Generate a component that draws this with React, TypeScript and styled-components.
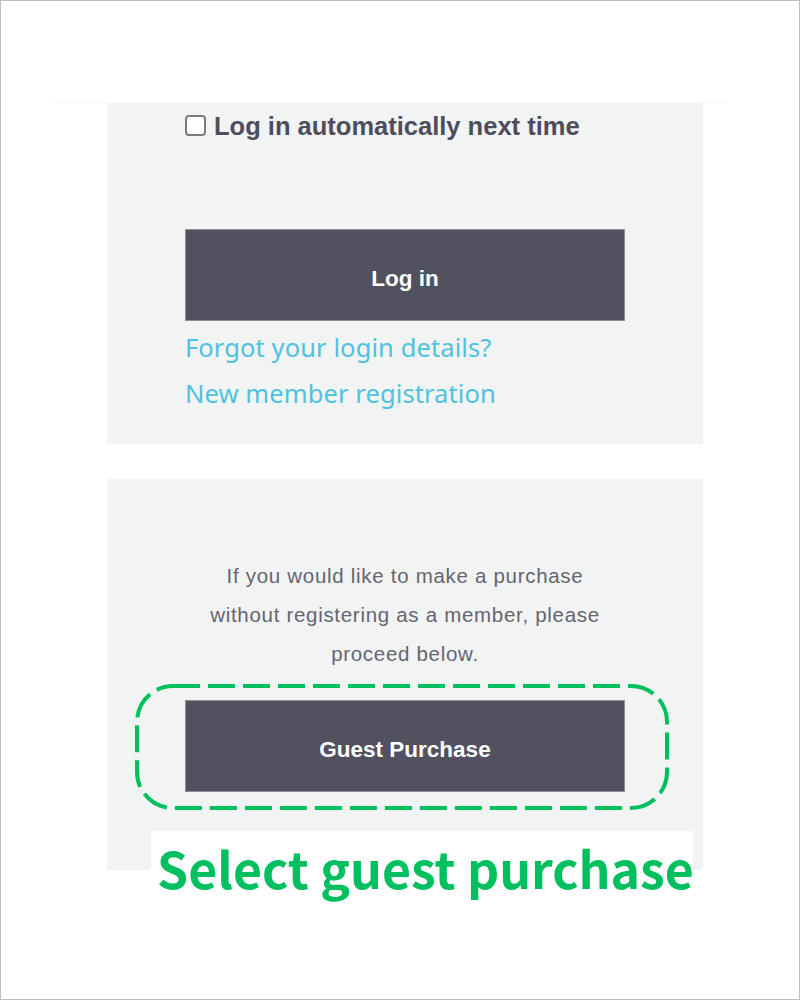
import styled, { createGlobalStyle } from 'styled-components';

const GlobalStyle = createGlobalStyle`
  html, body {
    margin: 0;
    padding: 0;
    background: #fff;
  }
  * {
    box-sizing: border-box;
  }
`

const Frame = styled.div`
  width: 800px;
  height: 1000px;
  border: 1px solid #bdbdbd;
  background: #fff;
  padding-top: 101px;
  font-family: "Liberation Sans", Arial, sans-serif;
`

const TopStrip = styled.div`
  margin-left: 49px;
  width: 678px;
  height: 1px;
  background: #f6f7f7;
`

const Panel = styled.div<{ $top: number; $bottom: number }>`
  margin-left: 106px;
  width: 596px;
  background: #f2f3f3;
  padding: ${p => p.$top}px 78px ${p => p.$bottom}px;
`

const CheckRow = styled.label`
  display: flex;
  align-items: center;
  gap: 8px;
  height: 30px;
  color: #4e4d5d;
  font-size: 25.5px;
  font-weight: 700;
  cursor: pointer;
`

const CheckBox = styled.span`
  width: 21px;
  height: 21px;
  margin-top: -2px;
  border: 2px solid #7a7a7a;
  border-radius: 4px;
  background: #fff;
  flex-shrink: 0;
`

const DarkButton = styled.button<{ $mt: number }>`
  display: flex;
  align-items: center;
  justify-content: center;
  width: 440px;
  height: 92px;
  margin-top: ${p => p.$mt}px;
  padding-top: 8px;
  background: #52515f;
  border: 1px solid #8e8d98;
  color: #fff;
  font-family: "Liberation Sans", Arial, sans-serif;
  font-size: 22.5px;
  font-weight: 700;
  cursor: pointer;
`

const Links = styled.div`
  display: flex;
  flex-direction: column;
  margin-top: 3px;
`

const TextLink = styled.a`
  display: block;
  height: 46px;
  line-height: 46px;
  color: #4fc2e0;
  font-family: "Noto Sans", sans-serif;
  font-size: 25.5px;
  letter-spacing: 0.1px;
  text-decoration: none;
  white-space: nowrap;
`

const Note = styled.p`
  margin: 0;
  text-align: center;
  color: #666570;
  font-size: 20.5px;
  line-height: 39px;
  letter-spacing: 0.7px;
`

const Highlight = styled.div`
  position: relative;
  width: 440px;
`

const DashedRing = styled.svg`
  position: absolute;
  left: -50px;
  top: -16px;
  width: 534px;
  height: 126px;
  overflow: visible;
  pointer-events: none;
`

const Caption = styled.div`
  margin-top: -39px;
  margin-left: 150px;
  width: 542px;
  background: #fff;
  padding-left: 6px;
  color: #00bf5f;
  font-family: "Noto Sans CJK JP", "Noto Sans", sans-serif;
  font-size: 50px;
  font-weight: 700;
  line-height: 72px;
  white-space: nowrap;
`

const Gap = styled.div`
  height: 35px;
`

export default function App() {
  return (
    <>
      <GlobalStyle />
      <Frame>
        <TopStrip />
        <Panel $top={8} $bottom={28}>
          <CheckRow>
            <CheckBox />
            Log in automatically next time
          </CheckRow>
          <DarkButton $mt={88}>Log in</DarkButton>
          <Links>
            <TextLink href="#">Forgot your login details?</TextLink>
            <TextLink href="#">New member registration</TextLink>
          </Links>
        </Panel>
        <Gap />
        <Panel $top={77} $bottom={78}>
          <Note>
            If you would like to make a purchase
            <br />
            without registering as a member, please
            <br />
            proceed below.
          </Note>
          <Highlight>
            <DarkButton $mt={27}>Guest Purchase</DarkButton>
            <DashedRing viewBox="0 0 534 126">
              <rect
                x="2"
                y="2"
                width="530"
                height="122"
                rx="36"
                fill="none"
                stroke="#00bf5f"
                strokeWidth="4"
                strokeDasharray="27 8"
              />
            </DashedRing>
          </Highlight>
        </Panel>
        <Caption>Select guest purchase</Caption>
      </Frame>
    </>
  )
}
